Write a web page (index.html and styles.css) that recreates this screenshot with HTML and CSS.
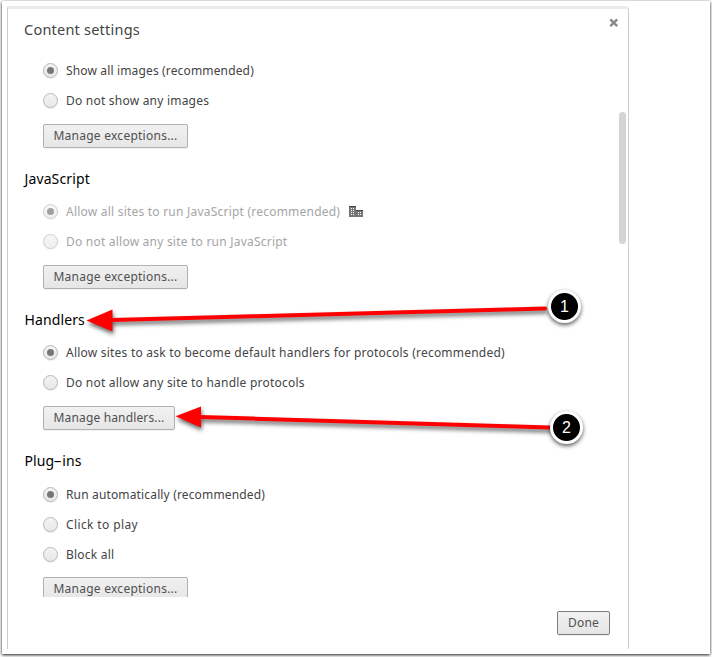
FILE: index.html
```html
<!DOCTYPE html>
<html lang="en">
<head>
<meta charset="utf-8">
<title>Content settings</title>
<link rel="stylesheet" href="styles.css">
</head>
<body>
<div class="frame">
  <main class="dialog">
    <header class="dialog-header">
      <h1><span>Content settings</span></h1>
      <svg class="close" width="10" height="10" viewBox="0 0 10 10"><path d="M1.3 1.3 8.2 8.2M8.2 1.3 1.3 8.2"/></svg>
    </header>
    <div class="content">
      <section>
        <label class="option snug"><i class="radio on"></i><span>Show all images (recommended)</span></label>
        <label class="option"><i class="radio"></i><span>Do not show any images</span></label>
        <button class="button">Manage exceptions...</button>
      </section>
      <section>
        <h2>JavaScript</h2>
        <label class="option disabled"><i class="radio on"></i><span>Allow all sites to run JavaScript (recommended)</span>
          <svg class="building" width="14" height="11" viewBox="0 0 14 11" shape-rendering="crispEdges"><path fill="#777" d="M0 0h7v4h7v7H0z"/><path fill="#444" d="M0 0h7v1H0zM7 4h7v1H7z"/><path fill="#fff" d="M2 2h1v1H2zM4 2h1v1H4zM2 4h1v1H2zM4 4h1v1H4zM2 6h1v1H2zM4 6h1v1H4zM2 8h1v1H2zM4 8h1v1H4zM9 6h1v1H9zM11 6h1v1h-1zM9 8h1v1H9zM11 8h1v1h-1z"/></svg>
        </label>
        <label class="option disabled"><i class="radio"></i><span>Do not allow any site to run JavaScript</span></label>
        <button class="button">Manage exceptions...</button>
      </section>
      <section>
        <h2>Handlers</h2>
        <label class="option"><i class="radio on"></i><span>Allow sites to ask to become default handlers for protocols (recommended)</span></label>
        <label class="option"><i class="radio"></i><span>Do not allow any site to handle protocols</span></label>
        <button class="button handlers">Manage handlers...</button>
      </section>
      <section class="plugins">
        <h2>Plug<span class="dash">–</span>ins</h2>
        <label class="option snug"><i class="radio on"></i><span>Run automatically (recommended)</span></label>
        <label class="option wide"><i class="radio"></i><span>Click to play</span></label>
        <label class="option"><i class="radio"></i><span>Block all</span></label>
        <button class="button">Manage exceptions...</button>
      </section>
      <div class="scrollbar"></div>
    </div>
    <footer><button class="button done">Done</button></footer>
  </main>
</div>
<svg class="arrows" width="712" height="657" viewBox="0 0 712 657">
  <path d="M112 320 545 308.5"/><path class="head" d="M86.500 320.500 112.500 309.500V331.500z"/>
  <path d="M200 417 550 427.500"/><path class="head" d="M175.500 416.300 201 406.500V427.500z"/>
</svg>
<div class="marker one">1</div>
<div class="marker two">2</div>
</body>
</html>
```
FILE: styles.css
```css
* { box-sizing: border-box; }
body {
  margin: 0;
  width: 712px;
  height: 657px;
  overflow: hidden;
  background: #fff;
  font-family: "Noto Sans", "Open Sans", sans-serif;
  font-size: 12px;
  color: #444;
}
.frame {
  width: 708px;
  height: 653px;
  margin: 1px 0 0 2px;
  padding: 5px 0 0 5px;
  background: #fff;
  box-shadow: 0 1px 3px rgba(0, 0, 0, .9);
}
.dialog {
  display: flex;
  flex-direction: column;
  width: 622px;
  height: 643px;
  border: 1px solid #ccc;
  border-top: 3px solid #ebebeb;
  border-bottom: 0;
  border-radius: 0 4px 0 0;
}
.dialog-header {
  display: flex;
  justify-content: space-between;
  height: 46px;
  padding: 8px 9px 0 17px;
}
h1 {
  margin: 0 0 0 -1px;
  font-size: 14.5px;
  font-weight: 400;
  line-height: 24px;
  letter-spacing: .22px;
}
.close { margin-top: 1px; stroke: #888; stroke-width: 2.4; fill: none; }
.content {
  position: relative;
  height: 542px;
  overflow: hidden;
  padding-left: 17px;
}
section { display: flex; flex-direction: column; align-items: flex-start; }
h2 {
  margin: 0 0 0 -.5px;
  padding: 20px 0 6px;
  font-size: 14px;
  font-weight: 400;
  line-height: 22px;
  letter-spacing: .12px;
  color: #000;
}
.dash { display: inline-block; margin-right: .8px; transform: scaleX(1.1); }
.option {
  display: flex;
  align-items: center;
  height: 30px;
  margin-left: 18px;
  letter-spacing: .22px;
  white-space: nowrap;
}
.option.snug { letter-spacing: .15px; }
.option.wide { letter-spacing: .38px; }
.radio {
  display: grid;
  place-items: center;
  width: 15px;
  height: 15px;
  margin-right: 8px;
  border: 1px solid #b8b8b8;
  border-radius: 50%;
  background: linear-gradient(#f3f3f3, #e8e8e8);
  box-shadow: 0 1px 1px rgba(0, 0, 0, .08);
}
.radio.on::after {
  content: "";
  width: 7px;
  height: 7px;
  border-radius: 50%;
  background: #777;
}
.disabled { color: #a5a5a5; }
.disabled .radio { opacity: .7; }
.building { margin-left: 9px; }
.button {
  width: 145px;
  height: 24px;
  margin: 9px 0 0 18px;
  padding: 0;
  border: 1px solid #b1b1b1;
  border-radius: 2px;
  background: linear-gradient(#f1f1f1, #e6e6e6);
  box-shadow: 0 1px 1px rgba(0, 0, 0, .06);
  font: inherit;
  line-height: 22px;
  letter-spacing: .25px;
  color: #505050;
}
.button.handlers { width: 132px; letter-spacing: .15px; }
.plugins h2 { padding-bottom: 7px; }
.plugins .button { margin-top: 8px; }
.scrollbar {
  position: absolute;
  top: 57px;
  right: 2px;
  width: 7px;
  height: 132px;
  border-radius: 4px;
  background: #d4d4d4;
}
footer { display: flex; justify-content: flex-end; padding: 14px 18px 0 0; }
.button.done { width: 53px; margin: 0; border-color: #7d7d7d; }
.arrows {
  position: absolute;
  top: 0;
  left: 0;
  fill: none;
  stroke: #f00;
  stroke-width: 4;
  stroke-linecap: round;
  filter: drop-shadow(1px 3px 2px rgba(0, 0, 0, .6));
}
.arrows .head { fill: #f00; stroke: none; }
.marker {
  position: absolute;
  width: 33px;
  height: 33px;
  border: 3px solid #fff;
  border-radius: 50%;
  background: #000;
  box-shadow: 0 2px 4px rgba(0, 0, 0, .65);
  color: #fff;
  font: 16px/27px "Liberation Sans", sans-serif;
  text-align: center;
}
.one { left: 548px; top: 290px; }
.two { left: 550px; top: 411px; }
```
